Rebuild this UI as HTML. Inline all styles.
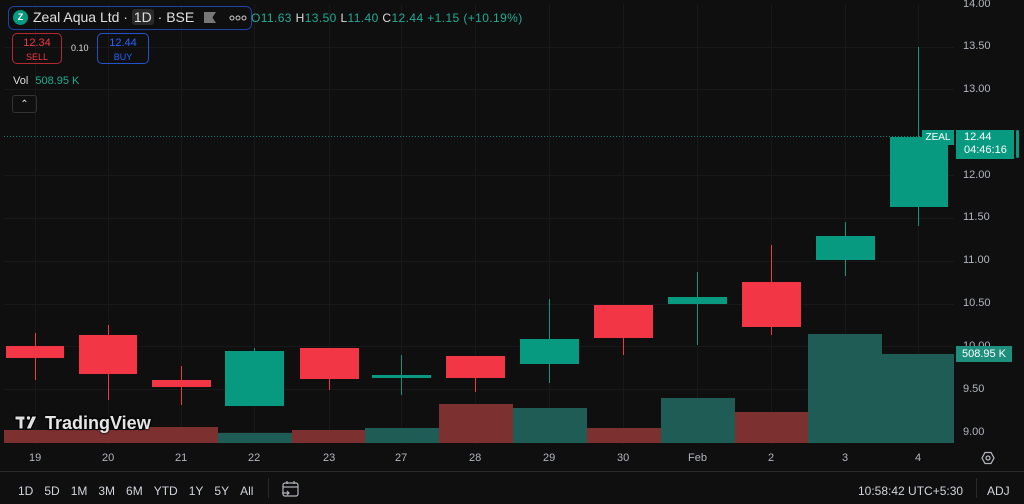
<!DOCTYPE html><html><head><style>
body{margin:0;width:1024px;height:504px;background:#0f0f0f;overflow:hidden;font-family:"Liberation Sans",sans-serif;color:#d1d4dc;position:relative}
.a{position:absolute}
.ax{font-size:11px;color:#b2b5be}
.tb span{margin-right:11px}
</style></head><body>
<svg class="a" style="left:0;top:0" width="1024" height="504">
<g stroke="#181818" stroke-width="1">
<line x1="4" x2="954" y1="47.5" y2="47.5"/><line x1="4" x2="954" y1="89.5" y2="89.5"/><line x1="4" x2="954" y1="175.5" y2="175.5"/><line x1="4" x2="954" y1="218.5" y2="218.5"/><line x1="4" x2="954" y1="261.5" y2="261.5"/><line x1="4" x2="954" y1="304.5" y2="304.5"/><line x1="4" x2="954" y1="346.5" y2="346.5"/><line x1="4" x2="954" y1="389.5" y2="389.5"/><line x1="4" x2="954" y1="432.5" y2="432.5"/>
<line x1="35.5" x2="35.5" y1="4" y2="444"/><line x1="108.5" x2="108.5" y1="4" y2="444"/><line x1="181.5" x2="181.5" y1="4" y2="444"/><line x1="254.5" x2="254.5" y1="4" y2="444"/><line x1="329.5" x2="329.5" y1="4" y2="444"/><line x1="401.5" x2="401.5" y1="4" y2="444"/><line x1="475.5" x2="475.5" y1="4" y2="444"/><line x1="549.5" x2="549.5" y1="4" y2="444"/><line x1="623.5" x2="623.5" y1="4" y2="444"/><line x1="697.5" x2="697.5" y1="4" y2="444"/><line x1="771.5" x2="771.5" y1="4" y2="444"/><line x1="845.5" x2="845.5" y1="4" y2="444"/><line x1="918.5" x2="918.5" y1="4" y2="444"/>
</g>
<line x1="4" x2="954" y1="136.5" y2="136.5" stroke="#1d7e6f" stroke-dasharray="1,2"/>
<g>
<rect x="4" y="430" width="68" height="13" fill="#7c3030"/>
<rect x="72" y="430" width="73" height="13" fill="#7c3030"/>
<rect x="145" y="427" width="73" height="16" fill="#7c3030"/>
<rect x="218" y="433" width="74" height="10" fill="#1e5c55"/>
<rect x="292" y="430" width="73" height="13" fill="#7c3030"/>
<rect x="365" y="428" width="74" height="15" fill="#1e5c55"/>
<rect x="439" y="404" width="74" height="39" fill="#7c3030"/>
<rect x="513" y="408" width="74" height="35" fill="#1e5c55"/>
<rect x="587" y="428" width="74" height="15" fill="#7c3030"/>
<rect x="661" y="398" width="74" height="45" fill="#1e5c55"/>
<rect x="735" y="412" width="73" height="31" fill="#7c3030"/>
<rect x="808" y="334" width="74" height="109" fill="#1e5c55"/>
<rect x="882" y="354" width="72" height="89" fill="#1e5c55"/>
</g>
<g fill="#f23645" stroke="#f23645">
<line x1="35.5" x2="35.5" y1="333" y2="380"/><rect x="6" y="346" width="58" height="12" stroke="none"/>
<line x1="108.5" x2="108.5" y1="325" y2="400"/><rect x="79" y="335" width="58" height="39" stroke="none"/>
<line x1="181.5" x2="181.5" y1="366" y2="405"/><rect x="152" y="380" width="59" height="7" stroke="none"/>
<line x1="329.5" x2="329.5" y1="348" y2="390"/><rect x="300" y="348" width="59" height="31" stroke="none"/>
<line x1="475.5" x2="475.5" y1="356" y2="392"/><rect x="446" y="356" width="59" height="22" stroke="none"/>
<line x1="623.5" x2="623.5" y1="305" y2="355"/><rect x="594" y="305" width="59" height="33" stroke="none"/>
<line x1="771.5" x2="771.5" y1="245" y2="335"/><rect x="742" y="282" width="59" height="45" stroke="none"/>
</g>
<g fill="#089981" stroke="#089981">
<line x1="254.5" x2="254.5" y1="348" y2="406"/><rect x="225" y="351" width="59" height="55" stroke="none"/>
<line x1="401.5" x2="401.5" y1="355" y2="395"/><rect x="372" y="375" width="59" height="3" stroke="none"/>
<line x1="549.5" x2="549.5" y1="299" y2="383"/><rect x="520" y="339" width="59" height="25" stroke="none"/>
<line x1="697.5" x2="697.5" y1="272" y2="345"/><rect x="668" y="297" width="59" height="7" stroke="none"/>
<line x1="845.5" x2="845.5" y1="222" y2="276"/><rect x="816" y="236" width="59" height="24" stroke="none"/>
<line x1="918.5" x2="918.5" y1="47" y2="226"/><rect x="890" y="137" width="58" height="70" stroke="none"/>
</g>
<line x1="0" x2="1024" y1="471.5" y2="471.5" stroke="#2a2a2a"/>
<line x1="268.5" x2="268.5" y1="478" y2="498" stroke="#2a2a2a"/>
<line x1="976.5" x2="976.5" y1="478" y2="498" stroke="#2a2a2a"/>
<rect x="1016" y="130" width="3" height="28" rx="1.5" fill="#089981"/>
<g transform="translate(988,458)" fill="none" stroke="#b2b5be" stroke-width="1.3"><polygon points="-6,0 -3,-5.5 3,-5.5 6,0 3,5.5 -3,5.5"/><circle r="2"/></g>
<g transform="translate(282,481)" fill="none" stroke="#b2b5be" stroke-width="1.2"><rect x="1" y="2" width="15" height="13" rx="2"/><line x1="1" x2="16" y1="6" y2="6"/><line x1="5" x2="5" y1="0" y2="3"/><line x1="12" x2="12" y1="0" y2="3"/><path d="M0 12h7M5 10l2 2-2 2"/></g>
<g fill="#e0e0e0" stroke="#000" stroke-width="1" transform="translate(15,414)"><path d="M0 2h10v4H8v9H4V6H0z"/><circle cx="13.5" cy="4" r="2.2"/><path d="M17 2h5l-6 13h-5z"/></g>
<g fill="none" stroke="#ccc" stroke-width="1"><circle cx="232" cy="18" r="2"/><circle cx="238" cy="18" r="2"/><circle cx="244" cy="18" r="2"/></g>
</svg>
<div class="a" style="left:45px;top:413px;font-size:18px;font-weight:bold;color:#e6e6e6;text-shadow:0 0 2px #000,0 0 2px #000">TradingView</div>
<div class="a" style="left:8px;top:6px;width:242px;height:22px;border:1px solid #2140a8;border-radius:6px"></div>
<div class="a" style="left:13px;top:10px;width:15px;height:15px;border-radius:50%;background:#089981;color:#fff;font-size:9px;text-align:center;line-height:15px;font-weight:bold">Z</div>
<div class="a" style="left:33px;top:9px;font-size:14px;color:#e0e0e0">Zeal Aqua Ltd · <span style="background:#2a2a2a;border-radius:3px;padding:0 2px">1D</span> · BSE</div>
<div class="a" style="left:204px;top:12px;width:12px;height:11px;background:#777;clip-path:polygon(0 0,100% 0,70% 50%,100% 100%,0 100%)"></div>
<div class="a" style="left:251px;top:11px;font-size:12px;color:#22ab94;letter-spacing:0.4px">O11.63 <span style="color:#ddd">H</span>13.50 <span style="color:#ddd">L</span>11.40 <span style="color:#ddd">C</span>12.44 +1.15 (+10.19%)</div>
<div class="a" style="left:12px;top:33px;width:50px;height:31px;border:1px solid #b22833;border-radius:5px;text-align:center;color:#f23645;font-size:11px;line-height:14px;padding-top:2px;box-sizing:border-box">12.34<br><span style="font-size:9px">SELL</span></div>
<div class="a" style="left:71px;top:43px;font-size:9px;color:#ddd">0.10</div>
<div class="a" style="left:97px;top:33px;width:52px;height:31px;border:1px solid #2452c8;border-radius:5px;text-align:center;color:#2962ff;font-size:11px;line-height:14px;padding-top:2px;box-sizing:border-box">12.44<br><span style="font-size:9px">BUY</span></div>
<div class="a" style="left:13px;top:75px;font-size:11px;color:#ddd">Vol <span style="color:#22ab94;margin-left:4px">508.95 K</span></div>
<div class="a" style="left:12px;top:95px;width:25px;height:18px;border:1px solid #333;border-radius:3px;color:#ddd;font-size:10px;text-align:center;line-height:18px;box-sizing:border-box">⌃</div>
<div class="ax a" style="left:963px;top:-2px">14.00</div>
<div class="ax a" style="left:963px;top:40px">13.50</div>
<div class="ax a" style="left:963px;top:83px">13.00</div>
<div class="ax a" style="left:963px;top:169px">12.00</div>
<div class="ax a" style="left:963px;top:211px">11.50</div>
<div class="ax a" style="left:963px;top:254px">11.00</div>
<div class="ax a" style="left:963px;top:297px">10.50</div>
<div class="ax a" style="left:963px;top:340px">10.00</div>
<div class="ax a" style="left:963px;top:383px">9.50</div>
<div class="ax a" style="left:963px;top:426px">9.00</div>
<div class="a" style="left:922px;top:130px;width:32px;height:15px;background:#089981;color:#fff;font-size:10px;line-height:15px;text-align:center">ZEAL</div>
<div class="a" style="left:956px;top:130px;width:58px;height:29px;background:#089981;color:#fff;font-size:11px;line-height:13px;padding:1px 0 0 8px;box-sizing:border-box">12.44<br>04:46:16</div>
<div class="a" style="left:956px;top:346px;width:56px;height:16px;background:#1f8f7d;color:#fff;font-size:11px;line-height:16px;text-align:center">508.95 K</div>
<div class="ax a" style="top:452px;left:29px">19</div><div class="ax a" style="top:452px;left:102px">20</div><div class="ax a" style="top:452px;left:175px">21</div><div class="ax a" style="top:452px;left:248px">22</div><div class="ax a" style="top:452px;left:323px">23</div><div class="ax a" style="top:452px;left:395px">27</div><div class="ax a" style="top:452px;left:469px">28</div><div class="ax a" style="top:452px;left:543px">29</div><div class="ax a" style="top:452px;left:617px">30</div><div class="ax a" style="top:452px;left:688px">Feb</div><div class="ax a" style="top:452px;left:768px">2</div><div class="ax a" style="top:452px;left:842px">3</div><div class="ax a" style="top:452px;left:915px">4</div>
<div class="a tb" style="left:18px;top:484px;font-size:12px;color:#d1d4dc"><span>1D</span><span>5D</span><span>1M</span><span>3M</span><span>6M</span><span>YTD</span><span>1Y</span><span>5Y</span><span>All</span></div>
<div class="a" style="left:858px;top:484px;font-size:12px;color:#d1d4dc">10:58:42 UTC+5:30</div>
<div class="a" style="left:987px;top:484px;font-size:12px;color:#d1d4dc">ADJ</div>
</body></html>
